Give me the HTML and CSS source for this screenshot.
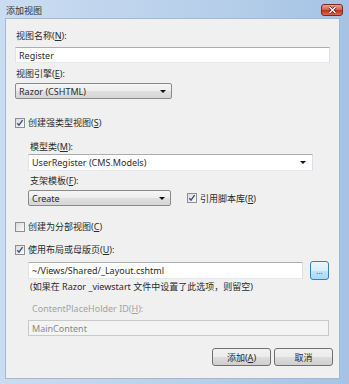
FILE: index.html
```html
<!DOCTYPE html>
<html lang="zh-CN">
<head>
  <meta charset="UTF-8" />
  <meta name="viewport" content="width=device-width, initial-scale=1.0" />
  <title>添加视图</title>
  <link rel="stylesheet" href="styles.css">
</head>
<body>
  <div class="window">
    <div class="titlebar">
      <span class="title">添加视图</span>
      <span class="close">
        <svg width="9" height="8" viewBox="0 0 9 8"><path d="M1.5 1 L7.5 7 M7.5 1 L1.5 7" stroke="#5a1010" stroke-width="2.6" /><path d="M1.5 1 L7.5 7 M7.5 1 L1.5 7" stroke="#fff" stroke-width="1.4" /></svg>
      </span>
    </div>

    <div class="client">
      <div class="label">视图名称(<u>N</u>):</div>
      <div class="textbox tb-name">Register</div>

      <div class="label l-engine">视图引擎(<u>E</u>):</div>
      <div class="combo combo-engine">Razor (CSHTML)<span class="arrow"></span></div>

      <div class="check check-typed">
        <span class="box"><svg width="8" height="8" viewBox="0 0 8 8"><path d="M1.3 4.2 L3 6.2 L6.6 1.2" stroke="#3d4f86" stroke-width="1.4" fill="none" /></svg></span>
        <span>创建强类型视图(<u>S</u>)</span>
      </div>

      <div class="group">
        <div class="label l-model">模型类(<u>M</u>):</div>
        <div class="textbox tb-model">UserRegister (CMS.Models)<span class="arrow"></span></div>

        <div class="label l-scaffold">支架模板(<u>F</u>):</div>
        <div class="scaffold-row">
          <div class="combo combo-scaffold">Create<span class="arrow"></span></div>
          <div class="check check-scripts">
            <span class="box"><svg width="8" height="8" viewBox="0 0 8 8"><path d="M1.3 4.2 L3 6.2 L6.6 1.2" stroke="#3d4f86" stroke-width="1.4" fill="none" /></svg></span>
            <span>引用脚本库(<u>R</u>)</span>
          </div>
        </div>
      </div>

      <div class="check check-partial">
        <span class="box"></span>
        <span>创建为分部视图(<u>C</u>)</span>
      </div>

      <div class="check check-layout">
        <span class="box"><svg width="8" height="8" viewBox="0 0 8 8"><path d="M1.3 4.2 L3 6.2 L6.6 1.2" stroke="#3d4f86" stroke-width="1.4" fill="none" /></svg></span>
        <span>使用布局或母版页(<u>U</u>):</span>
      </div>

      <div class="layout-row">
        <div class="textbox tb-layout">~/Views/Shared/_Layout.cshtml</div>
        <div class="btn-browse">...</div>
      </div>
      <div class="hint">(如果在 Razor _viewstart 文件中设置了此选项，则留空)</div>

      <div class="label l-cph">ContentPlaceHolder ID(<u>H</u>):</div>
      <div class="textbox tb-cph">MainContent</div>

      <div class="buttons">
        <div class="btn"><span>添加(<u>A</u>)</span></div>
        <div class="btn">取消</div>
      </div>
    </div>
  </div>
</body>
</html>
```

FILE: styles.css
```css
body {
  margin: 0;
  padding: 0;
  font-family: 'Noto Sans', 'Noto Sans CJK SC', sans-serif;
  font-size: 9px;
  color: #2b2b2b;
}
.window {
  width: 349px;
  height: 384px;
  box-sizing: border-box;
  padding: 0 9px 5px 5px;
  background: linear-gradient(90deg, #cadcf1, #b7cfea 60%, #a5c3e5);
  display: flex;
  flex-direction: column;
}
.titlebar {
  height: 18px;
  display: flex;
  justify-content: space-between;
  flex: none;
}
.title {
  margin-top: 5px;
  margin-left: 1px;
  line-height: 12px;
  color: #333;
}
.close {
  width: 22px;
  height: 12px;
  box-sizing: border-box;
  margin-top: 4px;
  margin-right: -3px;
  border: 1px solid #7a2a22;
  border-radius: 3px;
  background: linear-gradient(#e8a393, #d5634d 45%, #c4311c 55%, #d86b50);
  display: flex;
  align-items: center;
  justify-content: center;
}
.close svg {
  display: block;
}
.client {
  flex: 1;
  background: #f0f0f0;
  border: 1px solid #a3b9d3;
  padding: 11px 9px 0 9px;
  display: flex;
  flex-direction: column;
}
.label {
  height: 12px;
  line-height: 12px;
  padding-left: 1px;
}
.textbox {
  height: 16px;
  box-sizing: border-box;
  border: 1px solid #abadb3;
  border-color: #abadb3 #dbdfe6 #e3e9ef #e2e3ea;
  background: #fff;
  padding: 0 6px 0 3px;
  display: flex;
  align-items: center;
  white-space: nowrap;
}
.tb-name {
  margin-top: 5px;
}
.l-engine {
  margin-top: 5px;
}
.combo {
  height: 16px;
  box-sizing: border-box;
  border: 1px solid #8a8a8a;
  border-radius: 2px;
  background: linear-gradient(#f6f6f6, #ededed 50%, #e0e0e0 50%, #d6d6d6);
  padding: 0 5px 0 3px;
  display: flex;
  align-items: center;
  justify-content: space-between;
}
.combo-engine {
  margin-top: 3px;
  width: 157px;
}
.arrow {
  width: 0;
  height: 0;
  border-left: 3px solid transparent;
  border-right: 3px solid transparent;
  border-top: 3px solid #111;
}
.check {
  height: 13px;
  display: flex;
  align-items: center;
  gap: 3px;
}
.box {
  width: 10px;
  height: 10px;
  box-sizing: border-box;
  border: 1px solid #8e8f8f;
  background: linear-gradient(135deg, #dadada, #fbfbfb);
  display: flex;
  align-items: center;
  justify-content: center;
}
.box svg {
  display: block;
}
.check-typed {
  margin-top: 17px;
}
.group {
  padding-left: 13px;
  display: flex;
  flex-direction: column;
}
.l-model {
  margin-top: 12px;
  padding-left: 2px;
}
.tb-model {
  margin-top: 1px;
  margin-right: 17px;
  height: 17px;
  justify-content: space-between;
}
.l-scaffold {
  margin-top: 4px;
  padding-left: 2px;
}
.scaffold-row {
  margin-top: 3px;
  display: flex;
  align-items: center;
}
.combo-scaffold {
  width: 143px;
}
.check-scripts {
  margin-left: 16px;
}
.check-partial {
  margin-top: 14px;
}
.check-layout {
  margin-top: 10px;
}
.layout-row {
  margin-top: 5px;
  padding-left: 13px;
  display: flex;
  align-items: center;
  gap: 7px;
}
.tb-layout {
  width: 275px;
  height: 17px;
}
.btn-browse {
  width: 19px;
  height: 19px;
  box-sizing: border-box;
  border: 1px solid #3c7fb1;
  border-radius: 3px;
  background: linear-gradient(#eaf6fd, #d9f0fc 50%, #bee6fd 50%, #a7d9f5);
  font-size: 8px;
  color: #555;
  display: flex;
  align-items: center;
  justify-content: center;
}
.hint {
  margin-top: 1px;
  padding-left: 15px;
  height: 12px;
  line-height: 12px;
}
.l-cph {
  margin-top: 10px;
  padding-left: 17px;
  color: #a3a3a3;
}
.tb-cph {
  margin: 5px 1px 0 13px;
  background: #f4f4f4;
  border-color: #c9c9c9;
  color: #8a8a8a;
}
.buttons {
  margin-top: 12px;
  margin-right: -3px;
  display: flex;
  justify-content: flex-end;
  gap: 3px;
}
.btn {
  width: 59px;
  height: 18px;
  box-sizing: border-box;
  border: 1px solid #707070;
  border-radius: 3px;
  background: linear-gradient(#f2f2f2, #ebebeb 50%, #dddddd 50%, #cfcfcf);
  display: flex;
  align-items: center;
  justify-content: center;
}
```
